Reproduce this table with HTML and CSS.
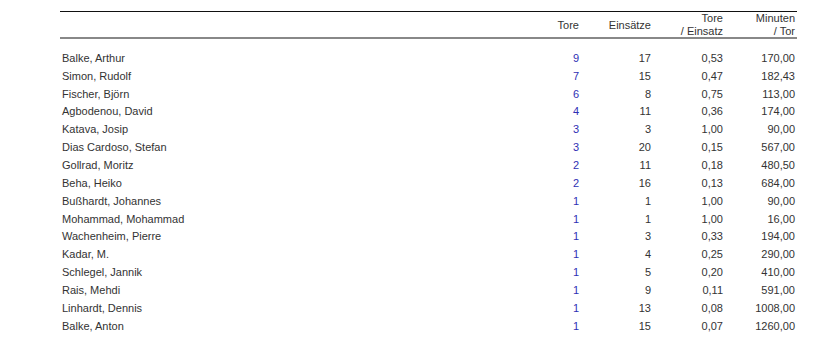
FILE: index.html
```html
<!DOCTYPE html>
<html lang="de">
<head>
    <meta charset="UTF-8">
    <title>Torschützen</title>
    <link rel="stylesheet" href="styles.css">
</head>
<body>
    <div class="report">
        <div class="row head">
            <div class="name"></div>
            <div class="num">Tore</div>
            <div class="num">Einsätze</div>
            <div class="num">Tore<br>/ Einsatz</div>
            <div class="num">Minuten<br>/ Tor</div>
        </div>
        <div class="body">
            <div class="row"><div class="name">Balke, Arthur</div><div class="num goals">9</div><div class="num">17</div><div class="num">0,53</div><div class="num">170,00</div></div>
            <div class="row"><div class="name">Simon, Rudolf</div><div class="num goals">7</div><div class="num">15</div><div class="num">0,47</div><div class="num">182,43</div></div>
            <div class="row"><div class="name">Fischer, Björn</div><div class="num goals">6</div><div class="num">8</div><div class="num">0,75</div><div class="num">113,00</div></div>
            <div class="row"><div class="name">Agbodenou, David</div><div class="num goals">4</div><div class="num">11</div><div class="num">0,36</div><div class="num">174,00</div></div>
            <div class="row"><div class="name">Katava, Josip</div><div class="num goals">3</div><div class="num">3</div><div class="num">1,00</div><div class="num">90,00</div></div>
            <div class="row"><div class="name">Dias Cardoso, Stefan</div><div class="num goals">3</div><div class="num">20</div><div class="num">0,15</div><div class="num">567,00</div></div>
            <div class="row"><div class="name">Gollrad, Moritz</div><div class="num goals">2</div><div class="num">11</div><div class="num">0,18</div><div class="num">480,50</div></div>
            <div class="row"><div class="name">Beha, Heiko</div><div class="num goals">2</div><div class="num">16</div><div class="num">0,13</div><div class="num">684,00</div></div>
            <div class="row"><div class="name">Bußhardt, Johannes</div><div class="num goals">1</div><div class="num">1</div><div class="num">1,00</div><div class="num">90,00</div></div>
            <div class="row"><div class="name">Mohammad, Mohammad</div><div class="num goals">1</div><div class="num">1</div><div class="num">1,00</div><div class="num">16,00</div></div>
            <div class="row"><div class="name">Wachenheim, Pierre</div><div class="num goals">1</div><div class="num">3</div><div class="num">0,33</div><div class="num">194,00</div></div>
            <div class="row"><div class="name">Kadar, M.</div><div class="num goals">1</div><div class="num">4</div><div class="num">0,25</div><div class="num">290,00</div></div>
            <div class="row"><div class="name">Schlegel, Jannik</div><div class="num goals">1</div><div class="num">5</div><div class="num">0,20</div><div class="num">410,00</div></div>
            <div class="row"><div class="name">Rais, Mehdi</div><div class="num goals">1</div><div class="num">9</div><div class="num">0,11</div><div class="num">591,00</div></div>
            <div class="row"><div class="name">Linhardt, Dennis</div><div class="num goals">1</div><div class="num">13</div><div class="num">0,08</div><div class="num">1008,00</div></div>
            <div class="row"><div class="name">Balke, Anton</div><div class="num goals">1</div><div class="num">15</div><div class="num">0,07</div><div class="num">1260,00</div></div>
        </div>
    </div>
</body>
</html>
```

FILE: styles.css
```css
body {
    margin: 0;
    background: #fff;
    font-family: "Liberation Sans", Arial, sans-serif;
    font-size: 11px;
    color: #333;
}
.report {
    margin: 11px 0 0 60px;
    width: 737px;
    border-top: 1px solid #111;
}
.row {
    display: grid;
    grid-template-columns: 1fr 60px 72px 72px 74px;
    align-items: center;
    height: 17.85px;
}
.row .num {
    text-align: right;
}
.row .num:last-child {
    padding-right: 2px;
}
.head {
    height: 25px;
    line-height: 13px;
    border-bottom: 2px solid #888;
}
.body {
    padding-top: 10px;
}
.name {
    padding-left: 2px;
}
.goals {
    color: #2f2fb4;
}
```
